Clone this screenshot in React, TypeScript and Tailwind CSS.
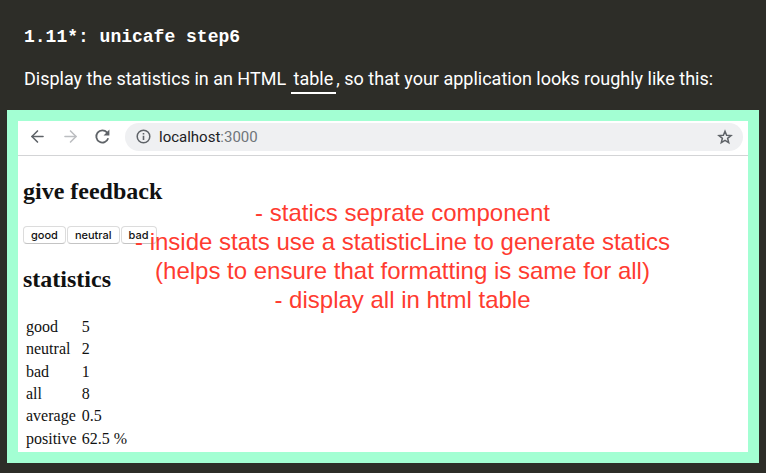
import { ArrowLeft, ArrowRight } from "lucide-react";

const rows = [
  ["good", "5"],
  ["neutral", "2"],
  ["bad", "1"],
  ["all", "8"],
  ["average", "0.5"],
  ["positive", "62.5 %"],
];

const notes = [
  "- statics seprate component",
  "- inside stats use a statisticLine to generate statics",
  "(helps to ensure that formatting is same for all)",
  "- display all in html table",
];

function Toolbar() {
  return (
    <div className="flex h-[35px] items-center border-b border-[#d3d4d6] pr-[5px] pb-[3px] pl-[10px] text-[#5f6368]">
      <button type="button" aria-label="Back" className="mr-[14px]">
        <ArrowLeft size={19} strokeWidth={2} />
      </button>
      <button type="button" aria-label="Forward" className="mr-[14px] text-[#bcbec1]">
        <ArrowRight size={19} strokeWidth={2} />
      </button>
      <button type="button" aria-label="Reload" className="mr-[14px]">
        <svg width="17" height="17" viewBox="0 0 17 17" fill="none">
          <path d="M14.2 10.3A6.1 6.1 0 1 1 13 4.4L14.6 6" stroke="currentColor" strokeWidth="1.8" />
          <path d="M15.4 1.6V7.4H9.6Z" fill="currentColor" />
        </svg>
      </button>
      <div className="flex h-[28px] min-w-0 flex-1 items-center rounded-full bg-[#eff0f2] pr-[10px] pl-[11px]">
        <svg width="15" height="15" viewBox="0 0 15 15" fill="none" className="mr-[8px] shrink-0">
          <circle cx="7.5" cy="7.5" r="6.3" stroke="currentColor" strokeWidth="1.5" />
          <path d="M7.5 6.7V11M7.5 4V5.4" stroke="currentColor" strokeWidth="1.6" />
        </svg>
        <span className="flex-1 font-['Roboto',sans-serif] text-[15px] leading-5 text-[#202124]">
          localhost<span className="text-[#70757a]">:3000</span>
        </span>
        <button type="button" aria-label="Bookmark this page">
          <svg width="16" height="16" viewBox="0 0 16 16" fill="none">
            <path
              d="M8 2.2L9.6 6.2L14 6.5L10.6 9.3L11.7 13.6L8 11.3L4.3 13.6L5.4 9.3L2 6.5L6.4 6.2Z"
              stroke="currentColor"
              strokeWidth="1.5"
            />
          </svg>
        </button>
      </div>
    </div>
  );
}

function FeedbackButton({ label }: { label: string }) {
  return (
    <button
      type="button"
      className="h-[18px] rounded-[4px] border border-[#dcdcdc] border-b-[#c4c4c4] bg-white px-[7px] font-['Inter',sans-serif] text-[11px] leading-4 font-medium text-[#111111]"
    >
      {label}
    </button>
  );
}

export default function App() {
  return (
    <main className="min-h-screen bg-[#2d2d28] px-[7px] pt-[24px] pb-[10px]">
      <header className="px-[17px] text-white">
        <h1 className="font-['Liberation_Mono',monospace] text-[18px] leading-[26px] font-bold">
          1.11*: unicafe step6
        </h1>
        <p className="mt-[14px] font-['Roboto',sans-serif] text-[18px] leading-[30px]">
          Display the statistics in an HTML{" "}
          <a href="#table" className="inline-block border-b-2 border-white px-[3px] leading-[26px]">
            table
          </a>
          , so that your application looks roughly like this:
        </p>
      </header>
      <section className="relative mt-[16px] border-[11px] border-[#a3ffd3] bg-white">
        <Toolbar />
        <div className="px-[5px] pb-[2px] font-['Liberation_Serif',serif] text-[#111111]">
          <h2 className="pt-[21px] text-[24px] leading-[28px] font-bold">give feedback</h2>
          <div className="mt-[21px] flex gap-px">
            <FeedbackButton label="good" />
            <FeedbackButton label="neutral" />
            <FeedbackButton label="bad" />
          </div>
          <h2 className="mt-[21px] text-[24px] leading-[28px] font-bold">statistics</h2>
          <table id="table" className="mt-[23px] h-[134px] text-[16px] leading-[20px]">
            <tbody>
              {rows.map(([name, value]) => (
                <tr key={name}>
                  <td className="pr-[5px] pl-[3px]">{name}</td>
                  <td>{value}</td>
                </tr>
              ))}
            </tbody>
          </table>
        </div>
        <div className="absolute inset-x-0 top-[77px] pl-[39px] text-center font-['Liberation_Sans',sans-serif] text-[24px] leading-[29px] text-[#ff3b30]">
          {notes.map((line) => (
            <p key={line}>{line}</p>
          ))}
        </div>
      </section>
    </main>
  );
}
